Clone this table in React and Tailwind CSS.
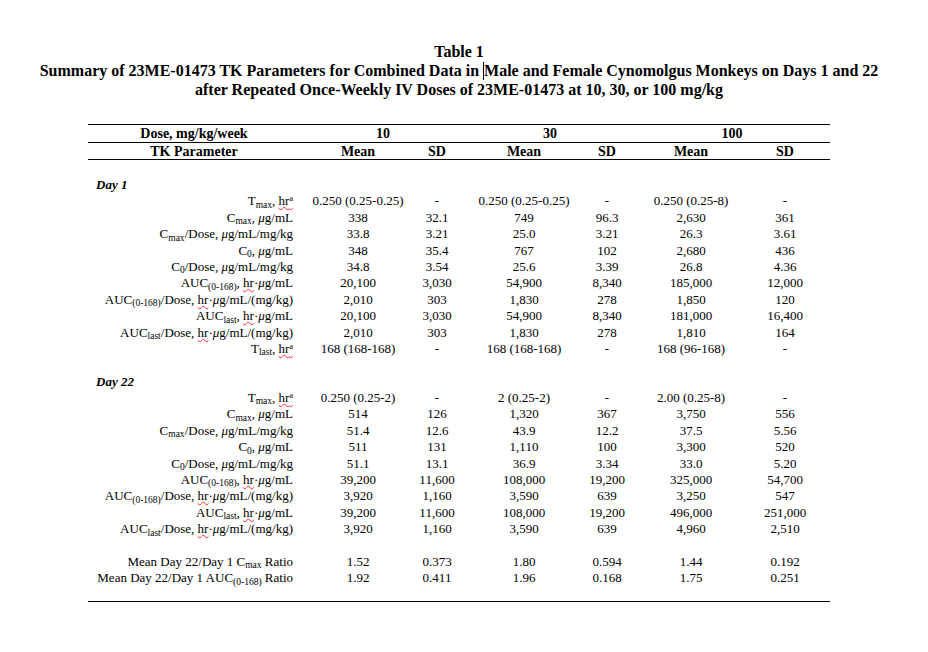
import React from "react";

const COLS = "grid grid-cols-[212px_116px_42px_132px_34px_134px_54px_18px]";

const Wavy = ({ children }) => (
  <span className="underline decoration-wavy decoration-red-500 decoration-[0.5px] underline-offset-[1px] [text-decoration-skip-ink:none]">{children}</span>
);
const Sub = ({ children }) => <sub className="text-[9.5px]">{children}</sub>;
const Mu = () => <i>μ</i>;
const HrA = () => (
  <Wavy>
    hr<sup className="text-[8px]">a</sup>
  </Wavy>
);
const HrDot = () => (
  <>
    <Wavy>hr</Wavy>·
  </>
);

const Row = ({ label, values }) => (
  <div className={`${COLS} h-[16.4px] leading-[16.4px]`}>
    <div className="flex justify-end whitespace-nowrap pr-[7px]">{label}</div>
    {values.map((v, i) => (
      <div key={i} className="flex justify-center whitespace-nowrap">
        {v}
      </div>
    ))}
    <div />
  </div>
);

const DayLabel = ({ children }) => (
  <div className="h-[16.4px] leading-[16.4px] pl-[8px] font-bold italic">{children}</div>
);
const Blank = () => <div className="h-[16.4px]" />;

const labels = {
  tmax: (
    <span>
      T<Sub>max</Sub>, <HrA />
    </span>
  ),
  cmax: (
    <span>
      C<Sub>max</Sub>, <Mu />g/mL
    </span>
  ),
  cmaxDose: (
    <span>
      C<Sub>max</Sub>/Dose, <Mu />g/mL/mg/kg
    </span>
  ),
  c0: (
    <span>
      C<Sub>0</Sub>, <Mu />g/mL
    </span>
  ),
  c0Dose: (
    <span>
      C<Sub>0</Sub>/Dose, <Mu />g/mL/mg/kg
    </span>
  ),
  auc: (
    <span>
      AUC<Sub>(0-168)</Sub>, <HrDot />
      <Mu />g/mL
    </span>
  ),
  aucDose: (
    <span>
      AUC<Sub>(0-168)</Sub>/Dose, <HrDot />
      <Mu />g/mL/(mg/kg)
    </span>
  ),
  auclast: (
    <span>
      AUC<Sub>last</Sub>, <HrDot />
      <Mu />g/mL
    </span>
  ),
  auclastDose: (
    <span>
      AUC<Sub>last</Sub>/Dose, <HrDot />
      <Mu />g/mL/(mg/kg)
    </span>
  ),
  tlast: (
    <span>
      T<Sub>last</Sub>, <HrA />
    </span>
  ),
};

const day1 = [
  ["tmax", ["0.250 (0.25-0.25)", "-", "0.250 (0.25-0.25)", "-", "0.250 (0.25-8)", "-"]],
  ["cmax", ["338", "32.1", "749", "96.3", "2,630", "361"]],
  ["cmaxDose", ["33.8", "3.21", "25.0", "3.21", "26.3", "3.61"]],
  ["c0", ["348", "35.4", "767", "102", "2,680", "436"]],
  ["c0Dose", ["34.8", "3.54", "25.6", "3.39", "26.8", "4.36"]],
  ["auc", ["20,100", "3,030", "54,900", "8,340", "185,000", "12,000"]],
  ["aucDose", ["2,010", "303", "1,830", "278", "1,850", "120"]],
  ["auclast", ["20,100", "3,030", "54,900", "8,340", "181,000", "16,400"]],
  ["auclastDose", ["2,010", "303", "1,830", "278", "1,810", "164"]],
  ["tlast", ["168 (168-168)", "-", "168 (168-168)", "-", "168 (96-168)", "-"]],
];

const day22 = [
  ["tmax", ["0.250 (0.25-2)", "-", "2 (0.25-2)", "-", "2.00 (0.25-8)", "-"]],
  ["cmax", ["514", "126", "1,320", "367", "3,750", "556"]],
  ["cmaxDose", ["51.4", "12.6", "43.9", "12.2", "37.5", "5.56"]],
  ["c0", ["511", "131", "1,110", "100", "3,300", "520"]],
  ["c0Dose", ["51.1", "13.1", "36.9", "3.34", "33.0", "5.20"]],
  ["auc", ["39,200", "11,600", "108,000", "19,200", "325,000", "54,700"]],
  ["aucDose", ["3,920", "1,160", "3,590", "639", "3,250", "547"]],
  ["auclast", ["39,200", "11,600", "108,000", "19,200", "496,000", "251,000"]],
  ["auclastDose", ["3,920", "1,160", "3,590", "639", "4,960", "2,510"]],
];

export default function App() {
  return (
    <div className="w-[928px] h-[652px] bg-white text-black font-['Liberation_Serif',serif] text-[13px] overflow-hidden">
      <div className="pt-[42px] pr-[10px] text-center font-bold text-[16px] leading-[19px]">
        <div>Table 1</div>
        <div className="whitespace-nowrap">
          Summary of 23ME-01473 TK Parameters for Combined Data in{" "}
          <span className="inline-block w-px h-[18px] bg-black align-[-4px]" />
          Male and Female Cynomolgus Monkeys on Days 1 and 22
        </div>
        <div>after Repeated Once-Weekly IV Doses of 23ME-01473 at 10, 30, or 100 mg/kg</div>
      </div>

      <div className="ml-[88px] w-[742px] mt-[25px]">
        <div className="border-t border-black" />
        <div className="grid grid-cols-[212px_166px_168px_196px] h-[17px] leading-[18px] font-bold text-[14px]">
          <div className="text-center">Dose, mg/kg/week</div>
          <div className="text-center">10</div>
          <div className="text-center">30</div>
          <div className="text-center">100</div>
        </div>
        <div className="border-t border-black" />
        <div className={`${COLS} h-[16px] leading-[17px] font-bold text-[14px]`}>
          <div className="text-center">TK Parameter</div>
          <div className="flex justify-center">Mean</div>
          <div className="flex justify-center">SD</div>
          <div className="flex justify-center">Mean</div>
          <div className="flex justify-center">SD</div>
          <div className="flex justify-center">Mean</div>
          <div className="flex justify-center">SD</div>
          <div />
        </div>
        <div className="border-t border-black" />

        <div className="h-[17px]" />
        <DayLabel>Day 1</DayLabel>
        {day1.map(([k, v]) => (
          <Row key={"d1" + k} label={labels[k]} values={v} />
        ))}
        <Blank />
        <DayLabel>Day 22</DayLabel>
        {day22.map(([k, v]) => (
          <Row key={"d22" + k} label={labels[k]} values={v} />
        ))}
        <Blank />
        <Row
          label={
            <span>
              Mean Day 22/Day 1 C<Sub>max</Sub> Ratio
            </span>
          }
          values={["1.52", "0.373", "1.80", "0.594", "1.44", "0.192"]}
        />
        <Row
          label={
            <span>
              Mean Day 22/Day 1 AUC<Sub>(0-168)</Sub> Ratio
            </span>
          }
          values={["1.92", "0.411", "1.96", "0.168", "1.75", "0.251"]}
        />
        <div className="h-[14px]" />
        <div className="border-t border-black" />
      </div>
    </div>
  );
}
